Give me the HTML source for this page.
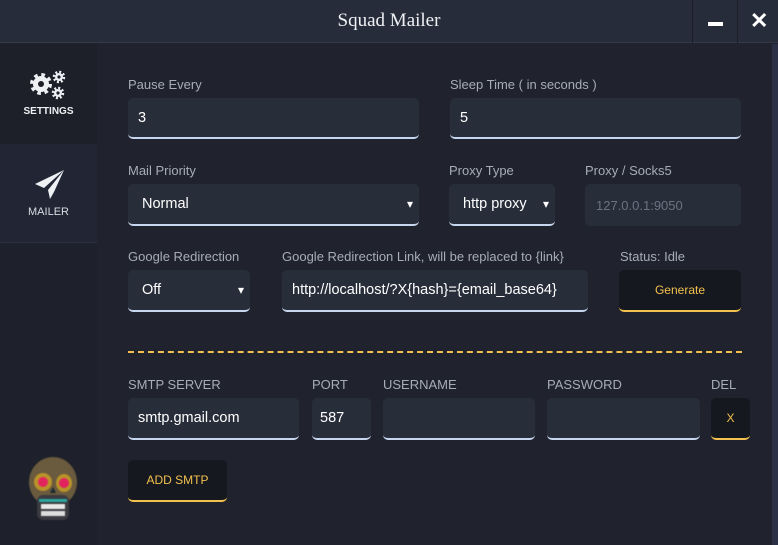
<!DOCTYPE html>
<html><head><style>
*{margin:0;padding:0;box-sizing:border-box}
body{width:778px;height:545px;overflow:hidden;background:#20232e;font-family:"Liberation Sans",sans-serif;position:relative;color:#fff}
.abs{position:absolute}
.title{left:0;top:0;width:778px;height:43px;background:#272c3a;border-bottom:1px solid #343a48}
.title .t{position:absolute;left:0;width:778px;top:10px;text-align:center;font-family:"Liberation Serif",serif;font-size:19px;color:#eef0f4}
.lbl{position:absolute;font-size:13px;color:#a7acb6}
.inp{position:absolute;background:#282d3a;border-radius:5px;border-bottom:2px solid #c5d6ee;font-size:14.5px;color:#fff;padding-left:10px;display:flex;align-items:center}
.sel::after{content:"▾";position:absolute;right:6px;font-size:12px;color:#fff}
.btn{position:absolute;background:#15181f;border-radius:5px;border-bottom:2px solid #f2c14e;color:#f2c14e;font-size:12px;display:flex;align-items:center;justify-content:center}
</style></head><body>
<div class="abs title"><div class="t">Squad Mailer</div>
<div class="abs" style="left:692px;top:0;width:1px;height:43px;background:#1b1e27"></div>
<div class="abs" style="left:737px;top:0;width:1px;height:43px;background:#1b1e27"></div>
<div class="abs" style="left:708px;top:22px;width:15px;height:4px;background:#fff"></div>
<div class="abs" style="left:750px;top:8px;font-size:22px;font-weight:bold;color:#fff">✕</div>
</div>
<div class="abs" style="left:772px;top:44px;width:6px;height:501px;background:#2b3046"></div>
<div class="abs" style="left:0;top:44px;width:97px;height:100px;background:#1d2029"></div>
<div class="abs" style="left:0;top:144px;width:97px;height:99px;background:#222634;border-bottom:1px solid #2c3040"></div>
<div class="abs" style="left:0;top:244px;width:97px;height:301px;background:#1e212b"></div>
<svg class="abs" style="left:29px;top:70px" width="38" height="30" viewBox="0 0 38 30">
<g fill="#eef0f4"><circle cx="12" cy="14" r="8"/><circle cx="30" cy="7" r="4"/><circle cx="29" cy="23" r="4"/></g>
<g fill="none" stroke="#eef0f4"><circle cx="12" cy="14" r="9" stroke-width="4" stroke-dasharray="3.5 3.57"/><circle cx="30" cy="7" r="5" stroke-width="2.5" stroke-dasharray="2 1.93"/><circle cx="29" cy="23" r="5" stroke-width="2.5" stroke-dasharray="2 1.93"/></g>
<g fill="#1d2029"><circle cx="12" cy="14" r="3"/><circle cx="30" cy="7" r="1.6"/><circle cx="29" cy="23" r="1.6"/></g></svg>
<div class="abs" style="left:0;width:97px;top:106px;text-align:center;font-size:10px;font-weight:bold;color:#eef0f4">SETTINGS</div>
<svg class="abs" style="left:34px;top:168px" width="32" height="32" viewBox="0 0 32 32"><path d="M30 2L1 16l9 4 20-18-16 20 2 9 4-7z" fill="#eef0f4"/></svg>
<div class="abs" style="left:0;width:97px;top:206px;text-align:center;font-size:11px;color:#d8dbe2">MAILER</div>
<svg class="abs" style="left:25px;top:455px;filter:blur(0.6px)" width="56" height="70" viewBox="0 0 56 70"><ellipse cx="28" cy="27" rx="24" ry="25" fill="#6a5a3e"/><rect x="12" y="40" width="32" height="25" rx="6" fill="#3a3a40"/><ellipse cx="18" cy="27" rx="9" ry="9" fill="#b9932a"/><ellipse cx="39" cy="28" rx="8" ry="9" fill="#b9932a"/><circle cx="18" cy="27" r="5" fill="#e2245e"/><circle cx="39" cy="28" r="5" fill="#e2245e"/><path d="M25 38l3-6 3 6z" fill="#1a2a30"/><rect x="14" y="44" width="28" height="3" fill="#2aa8a0"/><rect x="16" y="49" width="24" height="5" fill="#e8e8e8"/><rect x="16" y="56" width="24" height="5" fill="#ddd"/></svg>

<div class="lbl" style="left:128px;top:77px">Pause Every</div>
<div class="inp" style="left:128px;top:98px;width:291px;height:41px">3</div>
<div class="lbl" style="left:450px;top:77px">Sleep Time ( in seconds )</div>
<div class="inp" style="left:450px;top:98px;width:291px;height:41px">5</div>

<div class="lbl" style="left:128px;top:163px">Mail Priority</div>
<div class="inp sel" style="left:128px;top:184px;width:291px;height:42px;padding-left:14px">Normal</div>
<div class="lbl" style="left:449px;top:163px">Proxy Type</div>
<div class="inp sel" style="left:449px;top:184px;width:106px;height:42px;padding-left:14px">http proxy</div>
<div class="lbl" style="left:585px;top:163px">Proxy / Socks5</div>
<div class="inp" style="left:585px;top:184px;width:156px;height:42px;color:#6c7280;font-size:13px;padding-left:11px;border-bottom:none">127.0.0.1:9050</div>

<div class="lbl" style="left:128px;top:249px">Google Redirection</div>
<div class="inp sel" style="left:128px;top:270px;width:122px;height:42px;padding-left:14px">Off</div>
<div class="lbl" style="left:282px;top:249px">Google Redirection Link, will be replaced to {link}</div>
<div class="inp" style="left:282px;top:270px;width:306px;height:42px">http://localhost/?X{hash}={email_base64}</div>
<div class="lbl" style="left:620px;top:249px">Status: Idle</div>
<div class="btn" style="left:619px;top:270px;width:122px;height:42px">Generate</div>

<div class="abs" style="left:128px;top:351px;width:614px;border-top:2px dashed #f2c14e"></div>

<div class="lbl" style="left:128px;top:377px">SMTP SERVER</div>
<div class="lbl" style="left:312px;top:377px">PORT</div>
<div class="lbl" style="left:383px;top:377px">USERNAME</div>
<div class="lbl" style="left:547px;top:377px">PASSWORD</div>
<div class="lbl" style="left:711px;top:377px">DEL</div>
<div class="inp" style="left:128px;top:398px;width:171px;height:42px">smtp.gmail.com</div>
<div class="inp" style="left:312px;top:398px;width:59px;height:42px;padding-left:8px">587</div>
<div class="inp" style="left:383px;top:398px;width:152px;height:42px"></div>
<div class="inp" style="left:547px;top:398px;width:153px;height:42px"></div>
<div class="btn" style="left:711px;top:398px;width:39px;height:42px">X</div>
<div class="btn" style="left:128px;top:460px;width:99px;height:42px">ADD SMTP</div>
</body></html>
